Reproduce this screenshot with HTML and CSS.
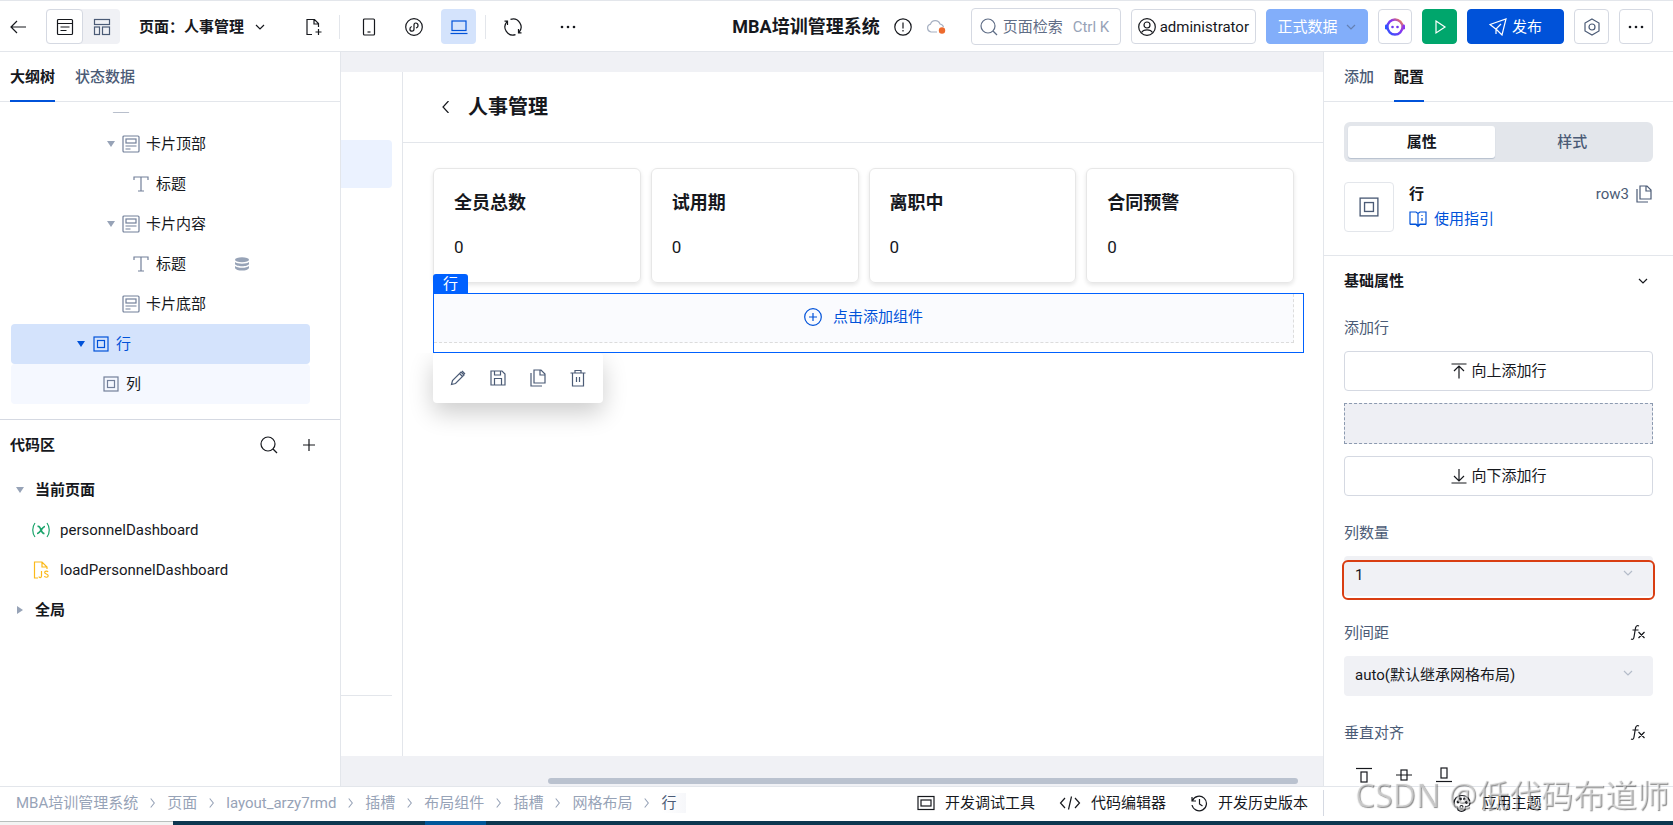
FILE: index.html
```html
<!DOCTYPE html>
<html lang="zh-CN">
<head>
  <meta charset="UTF-8">
  <meta name="viewport" content="width=device-width, initial-scale=1.0">
  <title>MBA培训管理系统</title>
  <link rel="stylesheet" href="styles.css">
</head>
<body>
  <svg class="sprite" aria-hidden="true">
    <symbol id="i-card" viewBox="0 0 18 18"><rect x="1" y="1" width="16" height="16" rx="1"/><rect x="4" y="4" width="10" height="4"/><path d="M3.500 11h11M3.500 14h5"/></symbol>
    <symbol id="i-box" viewBox="0 0 18 18"><rect x="2" y="2" width="14" height="14"/><rect x="5.500" y="5.500" width="7" height="7"/></symbol>
    <symbol id="i-text" viewBox="0 0 18 18"><path d="M2 5V2h14v3M9 2v14M6 16h6"/></symbol>
    <symbol id="i-chev" viewBox="0 0 12 12"><path d="M2 4l4 4 4-4"/></symbol>
    <symbol id="i-right" viewBox="0 0 10 14"><path d="M3 2l4 5-4 5"/></symbol>
    <symbol id="i-search" viewBox="0 0 18 18"><circle cx="8" cy="8" r="7"/><path d="M13 13l4 4"/></symbol>
    <symbol id="i-copy" viewBox="0 0 18 18"><path d="M5 1h7l4 4v9H5zM11 1v5h5M2 4v13h11"/></symbol>
    <symbol id="i-fx" viewBox="0 0 18 18"><path d="M9 2C7 1 6 2 5.500 4L4 13c-.3 2-1.200 3-3 2M2.500 6h6M8.500 8l6 6M14.500 8l-6 6"/></symbol>
    <symbol id="i-dots" viewBox="0 0 18 18"><circle cx="3" cy="9" r="1.300"/><circle cx="9" cy="9" r="1.300"/><circle cx="15" cy="9" r="1.300"/></symbol>
  </svg>

  <header class="topbar">
    <div class="topbar-left">
      <button class="icon-btn back" aria-label="返回"><svg class="icon" viewBox="0 0 18 18"><path d="M17 9H2M8 3L2 9l6 6"/></svg></button>
      <div class="mode-switch">
        <button class="mode active" aria-label="页面"><svg class="icon" viewBox="0 0 18 18"><rect x="1.500" y="1.500" width="15" height="15" rx="1"/><path d="M2 5.500h14M4.500 9h9M4.500 12.500h6"/></svg></button>
        <button class="mode" aria-label="布局"><svg class="icon" viewBox="0 0 18 18"><rect x="1.500" y="1.500" width="15" height="5"/><rect x="1.500" y="9" width="5" height="7.500"/><rect x="9.500" y="9" width="7" height="7.500"/></svg></button>
      </div>
      <button class="page-select">页面：人事管理 <svg class="icon small"><use href="#i-chev"/></svg></button>
      <button class="icon-btn new-page" aria-label="新建页面"><svg class="icon" viewBox="0 0 18 18"><path d="M7 16.500H2v-15h7.500l4 4V9M9 2v4h4M13.500 11v6M10.500 14h6"/></svg></button>
      <span class="divider"></span>
      <div class="devices">
        <button class="device" aria-label="手机"><svg class="icon" viewBox="0 0 18 18"><rect x="3.500" y="1" width="11" height="16" rx="1"/><path d="M7.500 14h3"/></svg></button>
        <button class="device" aria-label="小程序"><svg class="icon" viewBox="0 0 18 18"><circle cx="9" cy="9" r="8.300"/><path d="M11 10c3-1 2.500-5-.3-5C9.500 5 9 6 9 7v4c0 1.200-.8 2.200-2 2.200-2.700 0-2.800-3.800-.3-4.700"/></svg></button>
        <button class="device active" aria-label="电脑"><svg class="icon" viewBox="0 0 18 18"><rect x="2" y="3" width="14" height="9.500"/><path d="M.5 15.500h17"/></svg></button>
      </div>
      <span class="divider"></span>
      <button class="icon-btn refresh" aria-label="刷新"><svg class="icon" viewBox="0 0 18 18"><path d="M6.500 1.400A8 8 0 0 1 15 14.300M11.500 16.600A8 8 0 0 1 3 3.700M3.500 7V3.200H.5M14.500 11v3.800h3"/></svg></button>
      <button class="icon-btn more" aria-label="更多"><svg class="icon solid"><use href="#i-dots"/></svg></button>
    </div>

    <div class="topbar-right">
      <h1 class="app-title">MBA培训管理系统</h1>
      <svg class="icon info" viewBox="0 0 18 18"><circle cx="9" cy="9" r="8.200"/><path d="M9 4.500v6M9 12v1.500"/></svg>
      <svg class="icon cloud" viewBox="0 0 20 18"><path d="M11 14H5a4 4 0 0 1-.5-7.800A5 5 0 0 1 14 6c2 .4 3.200 1.600 3.500 3"/><circle class="cloud-dot" cx="16" cy="12.500" r="3.200"/></svg>
      <label class="search">
        <svg class="icon"><use href="#i-search"/></svg>
        <input type="text" placeholder="页面检索" aria-label="页面检索">
        <span class="hotkey">Ctrl K</span>
      </label>
      <button class="btn user"><svg class="icon" viewBox="0 0 18 18"><circle cx="9" cy="9" r="8.300"/><circle cx="9" cy="7" r="3"/><path d="M3.500 14.500c2-3.500 9-3.500 11 0"/></svg>administrator</button>
      <button class="btn data-source">正式数据<svg class="icon small"><use href="#i-chev"/></svg></button>
      <button class="btn square" aria-label="AI 助手">
        <svg class="bot" viewBox="0 0 20 20">
          <defs><linearGradient id="bot" x1="1" y1="0" x2="0" y2="1"><stop offset="0" stop-color="#ff8a3c"/><stop offset=".4" stop-color="#8a35f0"/><stop offset="1" stop-color="#2a55ff"/></linearGradient></defs>
          <circle cx="10" cy="10" r="7.500" fill="none" stroke="url(#bot)" stroke-width="2.400"/>
          <rect x="0" y="7.500" width="2.500" height="5" rx="1.200" fill="#2a55ff"/><rect x="17.500" y="7.500" width="2.500" height="5" rx="1.200" fill="#8a35f0"/>
          <circle cx="7.500" cy="10" r="1.300" fill="#7038f0"/><circle cx="12.500" cy="10" r="1.300" fill="#7038f0"/>
        </svg>
      </button>
      <button class="btn preview" aria-label="预览"><svg class="icon" viewBox="0 0 18 18"><path d="M5 3l9 6-9 6z"/></svg></button>
      <button class="btn publish"><svg class="icon" viewBox="0 0 18 18"><path d="M1 6.500L17 1l-4 16-5-5zM12 6l-5 5v5"/></svg>发布</button>
      <button class="btn square setting" aria-label="设置"><svg class="icon" viewBox="0 0 18 18"><path d="M9 1l7 4v8l-7 4-7-4V5z"/><circle cx="9" cy="9" r="3"/></svg></button>
      <button class="btn square" aria-label="更多"><svg class="icon solid"><use href="#i-dots"/></svg></button>
    </div>
  </header>

  <div class="workspace">
    <aside class="left-panel">
      <div class="tabs">
        <button class="tab active">大纲树</button>
        <button class="tab">状态数据</button>
      </div>
      <ul class="tree">
        <li class="node level-2"><span class="caret"></span><svg class="icon"><use href="#i-card"/></svg></li>
        <li class="node level-3"><span class="caret down"></span><svg class="icon"><use href="#i-card"/></svg>卡片顶部</li>
        <li class="node level-4"><span class="caret"></span><svg class="icon"><use href="#i-text"/></svg>标题</li>
        <li class="node level-3"><span class="caret down"></span><svg class="icon"><use href="#i-card"/></svg>卡片内容</li>
        <li class="node level-4"><span class="caret"></span><svg class="icon"><use href="#i-text"/></svg>标题
          <svg class="database" viewBox="0 0 14 14"><ellipse cx="7" cy="2.800" rx="7" ry="2.500"/><path d="M0 5c2 2.200 12 2.200 14 0v2c-1 3-13 3-14 0zM0 9c2 2.400 12 2.400 14 0v2c-1 3.400-13 3.400-14 0z"/></svg>
        </li>
        <li class="node level-3"><span class="caret"></span><svg class="icon"><use href="#i-card"/></svg>卡片底部</li>
        <li class="node level-0 selected"><span class="caret down"></span><svg class="icon"><use href="#i-box"/></svg>行</li>
        <li class="node level-1 child"><span class="caret"></span><svg class="icon"><use href="#i-box"/></svg>列</li>
      </ul>
      <section class="code">
        <div class="code-head">
          <h2>代码区</h2>
          <button class="icon-btn" aria-label="搜索"><svg class="icon"><use href="#i-search"/></svg></button>
          <button class="icon-btn" aria-label="新增"><svg class="icon" viewBox="0 0 18 18"><path d="M9 3v12M3 9h12"/></svg></button>
        </div>
        <div class="code-row group"><span class="caret down"></span>当前页面</div>
        <div class="code-row item"><svg class="icon var" viewBox="0 0 20 18"><path d="M4 2C1 6 1 12 4 16M16 2c3 4 3 10 0 14"/><path class="bold" d="M6.500 5.500C10 4 9.500 13 13.500 12.500M14 5.500c-3 0-4.500 7-8 7"/></svg>personnelDashboard</div>
        <div class="code-row item"><svg class="icon js" viewBox="0 0 20 18"><path d="M7 17H3.500V1H11l5 5v2M11 1v5h5M10.500 10v5c0 2-2.500 2-2.500.5M17 11c-.5-1.300-3.300-1.300-3.300.5s3.500 1.200 3.500 3.200-3.500 2-3.700.3"/></svg>loadPersonnelDashboard</div>
        <div class="code-row group"><span class="caret side"></span>全局</div>
      </section>
    </aside>

    <main class="canvas">
      <div class="stage">
        <div class="side-nav">
          <div class="side-item"></div>
          <div class="side-line"></div>
        </div>
        <div class="page">
          <div class="page-head">
            <svg class="icon small" viewBox="0 0 12 12"><path d="M8.500 0L3 6l5.500 6"/></svg>
            <h2>人事管理</h2>
          </div>
          <div class="page-body">
            <div class="cards">
              <div class="card"><h3>全员总数</h3><p>0</p></div>
              <div class="card"><h3>试用期</h3><p>0</p></div>
              <div class="card"><h3>离职中</h3><p>0</p></div>
              <div class="card"><h3>合同预警</h3><p>0</p></div>
            </div>
            <div class="row-select">
              <span class="row-label">行</span>
              <button class="slot"><svg class="icon" viewBox="0 0 18 18"><circle cx="9" cy="9" r="8.300"/><path d="M9 5v8M5 9h8"/></svg>点击添加组件</button>
              <div class="row-tools">
                <button class="icon-btn" aria-label="编辑"><svg class="icon" viewBox="0 0 18 18"><path d="M2.500 15.500l1-4 8.500-8.500 3 3-8.500 8.500zM10.500 4.500l3 3M13 2l3 3"/></svg></button>
                <button class="icon-btn" aria-label="保存"><svg class="icon" viewBox="0 0 18 18"><path d="M2 2h11l3 3v11H2zM5.500 2v4h6V2M5.500 16V9.500h7V16"/></svg></button>
                <button class="icon-btn" aria-label="复制"><svg class="icon"><use href="#i-copy"/></svg></button>
                <button class="icon-btn" aria-label="删除"><svg class="icon" viewBox="0 0 18 18"><path d="M1.500 4h15M3.500 4v13h11V4M6 4V1.500h6V4M7.500 8v5M10.500 8v5"/></svg></button>
              </div>
            </div>
          </div>
        </div>
      </div>
      <div class="scroll-track"><div class="scroll-thumb"></div></div>
    </main>

    <aside class="right-panel">
      <div class="tabs">
        <button class="tab">添加</button>
        <button class="tab active">配置</button>
      </div>
      <div class="segmented">
        <button class="segment active">属性</button>
        <button class="segment">样式</button>
      </div>
      <div class="component">
        <div class="component-icon"><svg class="icon" viewBox="0 0 18 18"><rect x="1" y="1" width="16" height="16"/><rect x="5" y="5" width="8" height="8"/></svg></div>
        <div class="component-info">
          <strong>行</strong>
          <a href="#"><svg class="icon" viewBox="0 0 18 18"><path d="M1 2h6l2 1.500L11 2h6v12h-6l-2 1.500L7 14H1zM9 3.500V15M13 8v3M13 5v1M1 14.500h6l2 2 2-2h6"/></svg>使用指引</a>
        </div>
        <div class="component-id">row3<button class="icon-btn" aria-label="复制"><svg class="icon"><use href="#i-copy"/></svg></button></div>
      </div>
      <div class="props">
        <div class="props-title"><h2>基础属性</h2><svg class="icon small"><use href="#i-chev"/></svg></div>
        <div class="field">
          <div class="field-label">添加行</div>
          <div class="row-buttons">
            <button class="btn"><svg class="icon" viewBox="0 0 18 18"><path d="M1.500 2h15M9 16.500V4M4 9l5-5 5 5"/></svg>向上添加行</button>
            <div class="row-current"></div>
            <button class="btn"><svg class="icon" viewBox="0 0 18 18"><path d="M1.500 16h15M9 2v12M4 9l5 5 5-5"/></svg>向下添加行</button>
          </div>
        </div>
        <div class="field">
          <label class="field-label" for="columns">列数量</label>
          <div class="select-wrap marked"><select id="columns"><option>1</option></select><svg class="icon small"><use href="#i-chev"/></svg></div>
        </div>
        <div class="field">
          <div class="field-label"><label for="gap">列间距</label><svg class="icon"><use href="#i-fx"/></svg></div>
          <div class="select-wrap"><select id="gap"><option>auto(默认继承网格布局)</option></select><svg class="icon small"><use href="#i-chev"/></svg></div>
        </div>
        <div class="field">
          <div class="field-label">垂直对齐<svg class="icon"><use href="#i-fx"/></svg></div>
          <div class="aligns">
            <button class="icon-btn" aria-label="顶部对齐"><svg class="icon" viewBox="0 0 18 18"><path d="M1 2.500h16"/><rect x="6" y="6" width="6" height="10"/></svg></button>
            <button class="icon-btn" aria-label="居中对齐"><svg class="icon" viewBox="0 0 18 18"><path d="M1 9h5M12 9h5M6 9h6"/><rect x="6" y="4" width="6" height="10"/></svg></button>
            <button class="icon-btn" aria-label="底部对齐"><svg class="icon" viewBox="0 0 18 18"><path d="M1 15.500h16"/><rect x="6" y="2" width="6" height="10"/></svg></button>
          </div>
        </div>
      </div>
    </aside>
  </div>

  <footer class="statusbar">
    <nav class="crumbs">
      <a href="#">MBA培训管理系统</a><svg class="icon"><use href="#i-right"/></svg>
      <a href="#">页面</a><svg class="icon"><use href="#i-right"/></svg>
      <a href="#">layout_arzy7rmd</a><svg class="icon"><use href="#i-right"/></svg>
      <a href="#">插槽</a><svg class="icon"><use href="#i-right"/></svg>
      <a href="#">布局组件</a><svg class="icon"><use href="#i-right"/></svg>
      <a href="#">插槽</a><svg class="icon"><use href="#i-right"/></svg>
      <a href="#">网格布局</a><svg class="icon"><use href="#i-right"/></svg>
      <a href="#" class="current">行</a>
    </nav>
    <div class="tools">
      <button class="tool"><svg class="icon" viewBox="0 0 18 18"><rect x="1" y="2.500" width="16" height="13"/><rect x="4" y="6" width="10" height="6"/></svg>开发调试工具</button>
      <button class="tool"><svg class="icon wide" viewBox="0 0 22 18"><path d="M6 4L1.500 9 6 14M16 4l4.500 5-4.500 5M12.500 2.500l-3 13"/></svg>代码编辑器</button>
      <button class="tool"><svg class="icon" viewBox="0 0 18 18"><path d="M2 3v4h4M2.500 6.500A7.300 7.300 0 1 1 2 11M9.500 5v5l3 2"/></svg>开发历史版本</button>
    </div>
    <div class="theme">
      <button class="tool"><svg class="icon" viewBox="0 0 18 18"><path d="M9 1.500c-5 0-8 3.500-8 7.500 0 3 1.500 4.500 3.500 4l.5 3c2 1.500 5 1.500 7 0l.5-3.500c2 .5 4.500-.5 4.500-3.500 0-4-3-7.500-8-7.500z"/><circle cx="5" cy="8" r=".8"/><circle cx="7.500" cy="5" r=".8"/><circle cx="11.500" cy="5" r=".8"/><circle cx="13.500" cy="8.500" r=".8"/><circle cx="8.500" cy="13" r="1.500"/></svg>应用主题</button>
    </div>
  </footer>
  <div class="taskbar"><span class="task-light"></span><span class="task-active"></span></div>
  <div class="watermark">CSDN @低代码布道师</div>
</body>
</html>
```
FILE: styles.css
```css
:root {
  --primary: #0052d9;
  --text: #16181d;
  --text-secondary: #4b5b76;
  --text-muted: #97a3b7;
  --border: #e3e6eb;
  --control-border: #d5d9e2;
  --bg: #f0f1f5;
}

* {
  box-sizing: border-box;
}

body {
  margin: 0;
  height: 100vh;
  display: flex;
  flex-direction: column;
  overflow: hidden;
  font-family: Roboto, "Noto Sans CJK SC", sans-serif;
  font-size: 15px;
  line-height: 20px;
  color: var(--text);
  background: #fff;
}

h1, h2, h3, p, ul {
  margin: 0;
  padding: 0;
}

h2 {
  font-size: 15px;
  font-weight: 700;
}

button, input, select {
  font: inherit;
  color: inherit;
}

button {
  display: flex;
  align-items: center;
  justify-content: center;
  flex-shrink: 0;
  padding: 0;
  border: none;
  background: none;
  white-space: nowrap;
  cursor: pointer;
}

a {
  color: inherit;
  text-decoration: none;
}

.sprite {
  display: none;
}

.icon {
  width: 18px;
  height: 18px;
  flex-shrink: 0;
  fill: none;
  stroke: currentColor;
  stroke-width: 1.2;
}

.icon.small {
  width: 12px;
  height: 12px;
}

.icon.solid {
  fill: currentColor;
  stroke: none;
}

.icon-btn {
  width: 18px;
  height: 18px;
}

/* top bar */
.topbar {
  display: flex;
  align-items: center;
  justify-content: space-between;
  height: 52px;
  flex-shrink: 0;
  padding: 1px 20px 0 9px;
  border-top: 1px solid var(--border);
  border-bottom: 1px solid var(--border);
}

.topbar-left,
.topbar-right {
  display: flex;
  align-items: center;
}

.mode-switch {
  display: flex;
  margin: 0 19px;
  border-radius: 4px;
  background: var(--bg);
}

.mode {
  width: 37px;
  height: 35px;
  color: var(--text-secondary);
}

.mode.active {
  border: 1px solid var(--control-border);
  border-radius: 4px;
  background: #fff;
  color: var(--text);
}

.page-select {
  gap: 10px;
  font-weight: 700;
}

.new-page {
  margin: 0 16px 0 39px;
}

.divider {
  width: 1px;
  height: 24px;
  background: var(--border);
}

.devices {
  display: flex;
  gap: 10px;
  margin: 0 9px 0 11px;
}

.device {
  width: 35px;
  height: 35px;
  border-radius: 4px;
}

.device.active {
  background: #d4e3fc;
  color: var(--primary);
}

.refresh {
  margin: 0 37px 0 18px;
}

.app-title {
  font-size: 18px;
  font-weight: 700;
  line-height: 24px;
}

.info {
  margin: 0 14px;
}

.cloud {
  width: 20px;
  margin-right: 25px;
  color: #a6b0c2;
}

.cloud-dot {
  fill: #ed6a2d;
  stroke: none;
}

.search {
  display: flex;
  align-items: center;
  width: 150px;
  height: 37px;
  margin-right: 10px;
  padding: 0 8px;
  border: 1px solid var(--control-border);
  border-radius: 4px;
  color: #5f6d86;
}

.search input {
  width: 70px;
  margin-left: 5px;
  padding: 0;
  border: none;
  outline: none;
}

.search input::placeholder {
  color: #5f6d86;
}

.hotkey {
  white-space: nowrap;
  color: var(--text-muted);
}

.btn {
  height: 35px;
  border: 1px solid var(--control-border);
  border-radius: 4px;
  background: #fff;
}

.topbar .btn {
  margin-right: 10px;
}

.topbar .btn:last-child {
  margin-right: 0;
}

.user {
  gap: 4px;
  padding: 0 6px;
}

.data-source {
  gap: 7px;
  width: 102px;
  border-color: #82aefa;
  background: #82aefa;
  color: #fff;
}

.data-source .icon {
  color: #6480b4;
}

.square {
  width: 34px;
}

.bot {
  width: 20px;
  height: 20px;
}

.preview {
  width: 35px;
  border-color: #00a66c;
  background: #00a66c;
  color: #fff;
}

.publish {
  gap: 5px;
  width: 97px;
  border-color: var(--primary);
  background: var(--primary);
  color: #fff;
}

.setting {
  width: 35px;
  color: var(--text-secondary);
}

/* workspace */
.workspace {
  display: flex;
  flex: 1;
  min-height: 0;
}

.left-panel {
  width: 341px;
  flex-shrink: 0;
  border-right: 1px solid var(--border);
}

.tabs {
  display: flex;
  gap: 20px;
  height: 50px;
  padding: 0 20px;
  border-bottom: 1px solid var(--border);
}

.left-panel .tabs {
  padding: 0 10px;
}

.tab {
  height: 50px;
  border-top: 2px solid transparent;
  border-bottom: 2px solid transparent;
  font-weight: 500;
  color: var(--text-secondary);
}

.tab.active {
  border-bottom-color: var(--primary);
  font-weight: 700;
  color: var(--text);
}

.tree {
  margin: 10px 30px 0 11px;
  padding-bottom: 15px;
  overflow: hidden;
  list-style: none;
}

.node {
  display: flex;
  align-items: center;
  height: 40px;
  border-radius: 4px;
}

.node:first-child {
  margin-top: -28px;
}

.node .icon {
  margin: 0 6px 0 3px;
  color: #73809a;
}

.level-0 { padding-left: 62px; }
.level-1 { padding-left: 72px; }
.level-2 { padding-left: 82px; }
.level-3 { padding-left: 92px; }
.level-4 { padding-left: 102px; }

.caret {
  display: flex;
  justify-content: center;
  width: 16px;
  flex-shrink: 0;
  color: var(--text-muted);
}

.caret.down::before {
  content: "";
  border: 4px solid transparent;
  border-top: 6px solid currentColor;
  border-bottom: none;
}

.caret.side::before {
  content: "";
  border: 4px solid transparent;
  border-left: 6px solid currentColor;
  border-right: none;
}

.node.selected {
  background: #d4e3fc;
}

.node.selected,
.node.selected .icon,
.node.selected .caret {
  color: var(--primary);
}

.node.child {
  background: #f5f8ff;
}

.database {
  width: 14px;
  height: 14px;
  margin-left: 49px;
  fill: var(--text-muted);
}

.code {
  border-top: 1px solid var(--control-border);
}

.code-head {
  display: flex;
  align-items: center;
  gap: 22px;
  height: 50px;
  padding: 0 22px 0 10px;
}

.code-head h2 {
  margin-right: auto;
}

.code-row {
  display: flex;
  align-items: center;
  height: 40px;
}

.code-row.group {
  gap: 7px;
  padding-left: 12px;
  font-weight: 700;
}

.code-row.item {
  gap: 9px;
  padding-left: 31px;
}

.code-row .icon {
  width: 20px;
}

.var {
  color: #1aa46b;
}

.var .bold {
  stroke-width: 1.6;
}

.js {
  color: #fbb91a;
}

/* canvas */
.canvas {
  display: flex;
  flex-direction: column;
  flex: 1;
  min-width: 0;
  padding-top: 20px;
  background: var(--bg);
}

.stage {
  display: flex;
  flex: 1;
  background: #fff;
}

.side-nav {
  display: flex;
  flex-direction: column;
  justify-content: space-between;
  width: 62px;
  padding: 68px 10px 60px 0;
  border-right: 1px solid var(--border);
}

.side-item {
  height: 48px;
  border-radius: 0 4px 4px 0;
  background: #ebf2ff;
}

.side-line {
  height: 1px;
  background: var(--border);
}

.page {
  flex: 1;
}

.page-head {
  display: flex;
  align-items: center;
  gap: 16px;
  height: 71px;
  padding-left: 37px;
  border-bottom: 1px solid var(--border);
}

.page-head h2 {
  font-size: 20px;
  line-height: 28px;
}

.page-body {
  padding: 25px 19px 0 30px;
}

.cards {
  display: flex;
  gap: 10px;
  padding-right: 10px;
}

.card {
  flex: 1;
  height: 115px;
  padding: 20px;
  border: 1px solid #e7e7e7;
  border-radius: 6px;
  box-shadow: 0 2px 4px rgba(0, 0, 0, 0.1);
}

.card h3 {
  margin-bottom: 18px;
  font-size: 18px;
  font-weight: 700;
  line-height: 28px;
}

.card p {
  font-size: 17px;
  line-height: 24px;
}

.row-select {
  position: relative;
  height: 60px;
  margin-top: 10px;
  padding: 0 9px 9px 0;
  border: 1px solid #0061ff;
}

.row-label {
  position: absolute;
  left: -1px;
  bottom: 100%;
  padding: 0 10px;
  border-radius: 3px 3px 0 0;
  background: #0061ff;
  color: #fff;
}

.slot {
  gap: 11px;
  width: 100%;
  height: 49px;
  padding-bottom: 2px;
  border-right: 1px dashed #dcdcdc;
  border-bottom: 1px dashed #dcdcdc;
  background: #fafbfe;
  color: var(--primary);
}

.row-tools {
  position: absolute;
  top: 59px;
  left: -1px;
  display: flex;
  gap: 22px;
  padding: 16px;
  border-radius: 4px;
  background: #fff;
  box-shadow: 0 10px 24px rgba(0, 0, 0, 0.2);
  clip-path: inset(0 -40px -50px -40px);
  color: var(--text-secondary);
}

.scroll-track {
  height: 30px;
  padding: 22px 25px 0 207px;
}

.scroll-thumb {
  height: 6px;
  border-radius: 3px;
  background: #bac2cf;
}

/* right panel */
.right-panel {
  width: 350px;
  flex-shrink: 0;
  overflow: hidden;
  border-left: 1px solid var(--border);
}

.segmented {
  display: flex;
  height: 40px;
  margin: 20px;
  padding: 4px;
  border-radius: 6px;
  background: #e3e6eb;
}

.segment {
  flex: 1;
  border-radius: 3px;
  font-weight: 500;
  color: var(--text-secondary);
}

.segment.active {
  flex: 0 0 49%;
  background: #fff;
  box-shadow: 0 1px 1px #b5bfce;
  font-weight: 700;
  color: var(--text);
}

.component {
  display: flex;
  align-items: flex-start;
  height: 73px;
  padding: 0 20px;
}

.component-icon {
  display: flex;
  align-items: center;
  justify-content: center;
  width: 50px;
  height: 50px;
  margin-right: 15px;
  border: 1px solid var(--border);
  border-radius: 4px;
  color: var(--text-secondary);
}

.component-icon .icon {
  width: 20px;
  height: 20px;
}

.component-info {
  display: flex;
  flex-direction: column;
  gap: 5px;
  padding-top: 2px;
}

.component-info strong {
  font-weight: 700;
}

.component-info a {
  display: flex;
  align-items: center;
  gap: 7px;
  color: var(--primary);
}

.component-id {
  display: flex;
  align-items: center;
  gap: 6px;
  margin-left: auto;
  padding-top: 2px;
  color: var(--text-secondary);
}

.props {
  padding: 0 20px;
  border-top: 1px solid var(--border);
}

.props-title {
  display: flex;
  align-items: center;
  justify-content: space-between;
  height: 50px;
  padding-right: 4px;
}

.field {
  padding-top: 10px;
  margin-bottom: 15px;
}

.field-label {
  display: flex;
  align-items: center;
  justify-content: space-between;
  height: 24px;
  margin-bottom: 11px;
  padding-right: 5px;
  color: var(--text-secondary);
}

.field-label .icon {
  color: var(--text);
}

.row-buttons {
  display: flex;
  flex-direction: column;
  gap: 12px;
}

.row-buttons .btn {
  gap: 3px;
  width: 100%;
  height: 40px;
}

.row-current {
  height: 41px;
  border: 1px dashed #8c9ab0;
  background: #eeeff4;
}

.select-wrap {
  position: relative;
}

.select-wrap select {
  display: block;
  width: 100%;
  height: 40px;
  padding: 0 11px 2px;
  border: none;
  border-radius: 4px;
  appearance: none;
  background: var(--bg);
}

.select-wrap .icon {
  position: absolute;
  top: 11px;
  right: 19px;
  color: #b4bcc9;
}

/* highlight frame around the select */
.marked::after {
  content: "";
  position: absolute;
  inset: 4px -2px -4px;
  border: 2px solid #d93e12;
  border-radius: 6px;
  pointer-events: none;
}

.aligns {
  display: flex;
  gap: 22px;
  padding: 10px 11px;
}

/* status bar */
.statusbar {
  display: flex;
  align-items: center;
  height: 35px;
  flex-shrink: 0;
  padding-bottom: 2px;
  border-top: 1px solid var(--border);
}

.crumbs {
  display: flex;
  align-items: center;
  gap: 10px;
  padding-left: 16px;
  color: var(--text-muted);
}

.crumbs .icon {
  width: 9px;
  height: 14px;
}

.crumbs .current {
  padding-right: 10px;
  color: var(--text-secondary);
  background: linear-gradient(90deg, #fff, #f6f7fa);
}

.tools {
  display: flex;
  gap: 24px;
  margin-left: auto;
  padding-right: 15px;
}

.tool {
  gap: 10px;
}

.icon.wide {
  width: 22px;
}

.theme {
  display: flex;
  justify-content: center;
  width: 350px;
  height: 26px;
  padding-right: 2px;
  border-left: 1px solid var(--control-border);
}

.taskbar {
  display: flex;
  height: 4px;
  flex-shrink: 0;
  background: #0c3750;
}

.task-light {
  width: 173px;
  margin-right: 252px;
  border-top: 1px solid #b9bfbd;
  background: #f3f4f3;
}

.task-active {
  width: 61px;
  background: #00579a;
}

.watermark {
  position: fixed;
  right: 4px;
  bottom: 8px;
  font-family: "Noto Sans", "Noto Sans CJK SC", sans-serif;
  font-size: 32px;
  line-height: 44px;
  white-space: nowrap;
  color: rgba(255, 255, 255, 0.5);
  text-shadow: 1px 1px 1px rgba(0, 0, 0, 0.45);
  pointer-events: none;
}
```
